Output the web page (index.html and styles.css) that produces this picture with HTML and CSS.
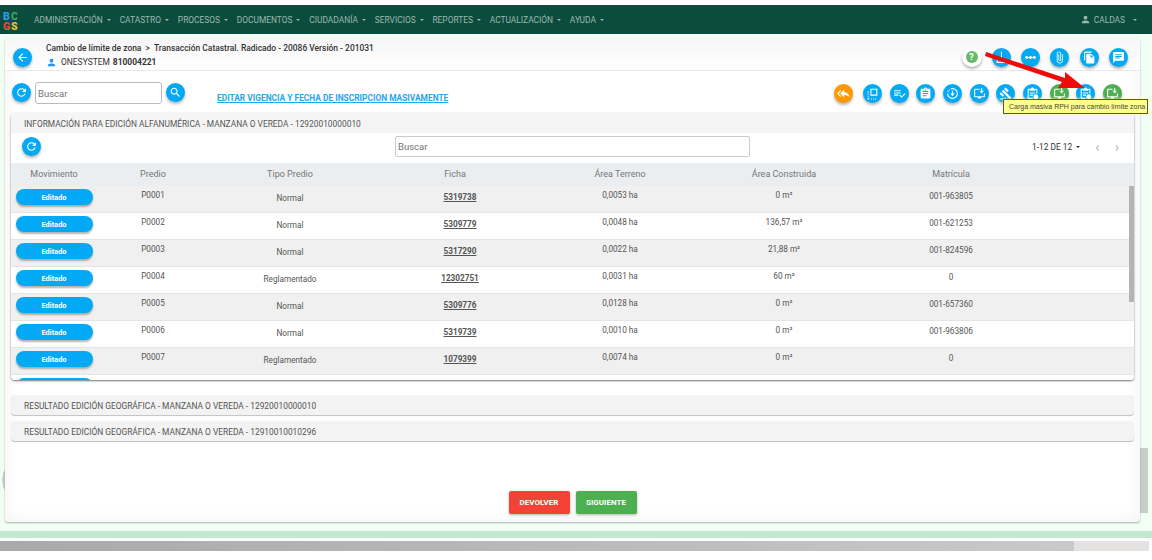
FILE: index.html
```html
<!DOCTYPE html>
<html lang="en">
<head>
    <meta charset="UTF-8">
    <meta name="viewport" content="width=device-width, initial-scale=1.0">
    <title>Cambio de límite de zona</title>
    <link rel="stylesheet" href="styles.css">
</head>
<body>
    <svg class="defs" width="0" height="0">
        <symbol id="i-back" viewBox="0 0 24 24"><path d="M20 11H7.83l5.59-5.59L12 4l-8 8 8 8 1.41-1.41L7.83 13H20v-2z"/></symbol>
        <symbol id="i-refresh" viewBox="0 0 24 24"><path d="M17.65 6.35C16.2 4.9 14.21 4 12 4c-4.42 0-7.99 3.58-7.99 8s3.57 8 7.99 8c3.73 0 6.84-2.55 7.73-6h-2.08c-.82 2.33-3.04 4-5.65 4-3.31 0-6-2.69-6-6s2.69-6 6-6c1.66 0 3.14.69 4.22 1.78L13 11h7V4l-2.35 2.35z"/></symbol>
        <symbol id="i-search" viewBox="0 0 24 24"><path d="M15.5 14h-.79l-.28-.27C15.41 12.59 16 11.11 16 9.5 16 5.91 13.09 3 9.5 3S3 5.91 3 9.5 5.91 16 9.5 16c1.61 0 3.09-.59 4.23-1.57l.27.28v.79l5 4.99L20.49 19l-4.99-5zm-6 0C7.01 14 5 11.99 5 9.5S7.01 5 9.5 5 14 7.01 14 9.5 11.99 14 9.5 14z"/></symbol>
        <symbol id="i-person" viewBox="0 0 24 24"><path d="M12 12c2.21 0 4-1.79 4-4s-1.79-4-4-4-4 1.79-4 4 1.79 4 4 4zm0 2c-2.67 0-8 1.34-8 4v2h16v-2c0-2.66-5.33-4-8-4z"/></symbol>
        <symbol id="i-clip" viewBox="0 0 24 24"><path d="M16.5 6v11.5c0 2.21-1.79 4-4 4s-4-1.79-4-4V5c0-1.38 1.12-2.5 2.5-2.5s2.5 1.12 2.5 2.5v10.5c0 .55-.45 1-1 1s-1-.45-1-1V6H10v9.5c0 1.38 1.12 2.5 2.5 2.5s2.5-1.12 2.5-2.5V5c0-2.21-1.79-4-4-4S7 2.79 7 5v12.5c0 3.04 2.46 5.5 5.5 5.5s5.5-2.46 5.5-5.5V6h-1.5z"/></symbol>
        <symbol id="i-copy" viewBox="0 0 24 24"><path d="M16 1H4c-1.1 0-2 .9-2 2v14h2V3h12V1zm-1 4l6 6v10c0 1.1-.9 2-2 2H7.99C6.89 23 6 22.1 6 21l.01-14c0-1.1.89-2 1.99-2h7zm-1 7h5.5L14 6.5V12z"/></symbol>
        <symbol id="i-chat" viewBox="0 0 24 24"><path d="M20 2H4c-1.1 0-1.99.9-1.99 2L2 22l4-4h14c1.1 0 2-.9 2-2V4c0-1.1-.9-2-2-2zM6 9h12v2H6V9zm8 5H6v-2h8v2zm4-6H6V6h12v2z"/></symbol>
        <symbol id="i-reply" viewBox="0 0 24 24"><path d="M7 8V5l-7 7 7 7v-3l-4-4 4-4zm6 1V5l-7 7 7 7v-4.1c5 0 8.5 1.6 11 5.1-1-5-4-10-11-11z"/></symbol>
        <symbol id="i-check" viewBox="0 0 24 24"><path d="M14 10H2v2h12v-2zm0-4H2v2h12V6zM2 16h8v-2H2v2zm19.5-4.5L23 13l-6.99 7-4.51-4.5L13 14l3.01 3 5.49-5.5z"/></symbol>
        <symbol id="i-note" viewBox="0 0 24 24"><path d="M19 3h-4.18C14.4 1.84 13.3 1 12 1c-1.3 0-2.4.84-2.82 2H5c-1.1 0-2 .9-2 2v14c0 1.1.9 2 2 2h14c1.1 0 2-.9 2-2V5c0-1.1-.9-2-2-2zm-7 0c.55 0 1 .45 1 1s-.45 1-1 1-1-.45-1-1 .45-1 1-1zm2 14H7v-2h7v2zm3-4H7v-2h10v2zm0-4H7V7h10v2z"/></symbol>
        <symbol id="i-gavel" viewBox="0 0 24 24"><path d="M1 21h12v2H1zM5.245 8.07l2.83-2.827 14.14 14.142-2.828 2.828zM12.317 1l5.657 5.656-2.83 2.83-5.654-5.66zM3.825 9.485l5.657 5.657-2.828 2.828-5.657-5.657z"/></symbol>
        <symbol id="i-dots" viewBox="0 0 24 24"><path d="M2 11h20v2H2z"/><circle cx="5" cy="12" r="2.6"/><circle cx="12" cy="12" r="2.6"/><circle cx="19" cy="12" r="2.6"/></symbol>
        <symbol id="i-upload" viewBox="0 0 24 24"><path d="M3 12h2v8h14v2H3zM11 2h2v12h5v2H6v-2h5z"/></symbol>
        <symbol id="i-front" viewBox="0 0 24 24"><path d="M8 3h13v13H8zm2 2v9h9V5zM3 8h2v2H3zm0 4h2v2H3zm0 4h2v2H3zm0 4h2v1h1v2H3zm6 1h2v2H9zm4 0h2v2h-2zm4 0h2v2h-2z"/></symbol>
        <symbol id="i-circle-down" viewBox="0 0 24 24"><path d="M12 2a10 10 0 0 0-3 .5l.6 1.900A8 8 0 1 1 4 12H2A10 10 0 1 0 12 2zM4.500 5.500l1.500 1.400 1.400-1.500-1.500-1.300zM2.500 9l1.900.6.600-1.900-1.900-.6z"/><path d="M11 7h2v5h3l-4 5-4-5h3z"/></symbol>
        <symbol id="i-screen" viewBox="0 0 24 24"><path d="M4 3h8v2H4v12h16v-5h2v5a2 2 0 0 1-2 2h-5v2H9v-2H4a2 2 0 0 1-2-2V5a2 2 0 0 1 2-2z"/><path d="M15 2h2v5h3l-4 5-4-5h3z"/></symbol>
        <symbol id="i-clipboard-plus" viewBox="0 0 24 24"><path d="M19 3h-4.180C14.400 1.840 13.300 1 12 1c-1.300 0-2.400.840-2.820 2H5a2 2 0 0 0-2 2v15a2 2 0 0 0 2 2h7v-2H5V5h2v2h10V5h2v7h2V5a2 2 0 0 0-2-2zM7 10h10v2H7zm0 4h6v2H7z"/><circle cx="18" cy="18" r="4.500"/></symbol>
    </svg>

    <nav class="navbar">
        <div class="logo">
            <span class="logo-b">B</span><span class="logo-c">C</span>
            <span class="logo-g">G</span><span class="logo-s">S</span>
        </div>
        <ul class="nav-menu">
            <li class="nav-item caret">ADMINISTRACIÓN</li>
            <li class="nav-item caret">CATASTRO</li>
            <li class="nav-item caret">PROCESOS</li>
            <li class="nav-item caret">DOCUMENTOS</li>
            <li class="nav-item caret">CIUDADANÍA</li>
            <li class="nav-item caret">SERVICIOS</li>
            <li class="nav-item caret">REPORTES</li>
            <li class="nav-item caret">ACTUALIZACIÓN</li>
            <li class="nav-item caret">AYUDA</li>
        </ul>
        <div class="nav-user caret">
            <svg class="nav-user-icon"><use href="#i-person"/></svg>
            CALDAS
        </div>
    </nav>

    <main class="page">
        <span class="deco-circle"></span>
        <span class="deco-strip"></span>

        <section class="card">
            <header class="card-header">
                <button class="round blue back-btn"><svg><use href="#i-back"/></svg></button>
                <div class="heading">
                    <p class="heading-title">Cambio de límite de zona &nbsp;&gt;&nbsp; Transacción Catastral. Radicado - 20086 Versión - 201031</p>
                    <p class="heading-owner">
                        <svg class="owner-icon"><use href="#i-person"/></svg>
                        ONESYSTEM <b>810004221</b>
                    </p>
                </div>
                <div class="header-actions">
                    <button class="round help-btn"><span>?</span></button>
                    <button class="round blue"><svg><use href="#i-upload"/></svg></button>
                    <button class="round blue"><svg><use href="#i-dots"/></svg></button>
                    <button class="round blue"><svg><use href="#i-clip"/></svg></button>
                    <button class="round blue"><svg><use href="#i-copy"/></svg></button>
                    <button class="round blue"><svg><use href="#i-chat"/></svg></button>
                </div>
            </header>

            <div class="toolbar">
                <button class="round blue"><svg><use href="#i-refresh"/></svg></button>
                <input class="search-input" placeholder="Buscar">
                <button class="round blue search-btn"><svg><use href="#i-search"/></svg></button>
                <a class="mass-link">EDITAR VIGENCIA Y FECHA DE INSCRIPCION MASIVAMENTE</a>
                <div class="toolbar-actions">
                    <button class="round orange"><svg><use href="#i-reply"/></svg></button>
                    <button class="round blue"><svg><use href="#i-front"/></svg></button>
                    <button class="round blue"><svg><use href="#i-check"/></svg></button>
                    <button class="round blue"><svg><use href="#i-note"/></svg></button>
                    <button class="round blue"><svg><use href="#i-circle-down"/></svg></button>
                    <button class="round blue"><svg><use href="#i-screen"/></svg></button>
                    <button class="round blue"><svg><use href="#i-gavel"/></svg></button>
                    <button class="round blue"><svg><use href="#i-clipboard-plus"/></svg></button>
                    <button class="round green"><svg><use href="#i-screen"/></svg></button>
                    <button class="round blue"><svg><use href="#i-clipboard-plus"/></svg></button>
                    <button class="round green"><svg><use href="#i-screen"/></svg></button>
                </div>
            </div>

            <section class="panel">
                <h2 class="panel-title">INFORMACIÓN PARA EDICIÓN ALFANUMÉRICA - MANZANA O VEREDA - 12920010000010</h2>
                <div class="table-tools">
                    <button class="round blue"><svg><use href="#i-refresh"/></svg></button>
                    <input class="table-search" placeholder="Buscar">
                    <span class="pager caret">1-12 DE 12</span>
                    <span class="pager-arrows"><i>&lsaquo;</i><i>&rsaquo;</i></span>
                </div>
                <div class="table-head grid-row">
                    <span>Movimiento</span><span>Predio</span><span>Tipo Predio</span><span>Ficha</span>
                    <span>Área Terreno</span><span>Área Construida</span><span>Matrícula</span>
                </div>
                <div class="table-body">
                    <div class="grid-row data-row">
                        <span><button class="state-btn">Editado</button></span><span class="up">P0001</span><span class="down">Normal</span><b class="ficha">5319738</b>
                        <span class="up">0,0053 ha</span><span class="up">0 m²</span><span class="mid">001-963805</span>
                    </div>
                    <div class="grid-row data-row">
                        <span><button class="state-btn">Editado</button></span><span class="up">P0002</span><span class="down">Normal</span><b class="ficha">5309779</b>
                        <span class="up">0,0048 ha</span><span class="up">136,57 m²</span><span class="mid">001-621253</span>
                    </div>
                    <div class="grid-row data-row">
                        <span><button class="state-btn">Editado</button></span><span class="up">P0003</span><span class="down">Normal</span><b class="ficha">5317290</b>
                        <span class="up">0,0022 ha</span><span class="up">21,88 m²</span><span class="mid">001-824596</span>
                    </div>
                    <div class="grid-row data-row">
                        <span><button class="state-btn">Editado</button></span><span class="up">P0004</span><span class="down">Reglamentado</span><b class="ficha">12302751</b>
                        <span class="up">0,0031 ha</span><span class="up">60 m²</span><span class="mid">0</span>
                    </div>
                    <div class="grid-row data-row">
                        <span><button class="state-btn">Editado</button></span><span class="up">P0005</span><span class="down">Normal</span><b class="ficha">5309776</b>
                        <span class="up">0,0128 ha</span><span class="up">0 m²</span><span class="mid">001-657360</span>
                    </div>
                    <div class="grid-row data-row">
                        <span><button class="state-btn">Editado</button></span><span class="up">P0006</span><span class="down">Normal</span><b class="ficha">5319739</b>
                        <span class="up">0,0010 ha</span><span class="up">0 m²</span><span class="mid">001-963806</span>
                    </div>
                    <div class="grid-row data-row">
                        <span><button class="state-btn">Editado</button></span><span class="up">P0007</span><span class="down">Reglamentado</span><b class="ficha">1079399</b>
                        <span class="up">0,0074 ha</span><span class="up">0 m²</span><span class="mid">0</span>
                    </div>
                    <div class="grid-row data-row">
                        <span><button class="state-btn"></button></span>
                    </div>
                    <span class="table-thumb"></span>
                </div>
            </section>

            <div class="accordion">RESULTADO EDICIÓN GEOGRÁFICA - MANZANA O VEREDA - 12920010000010</div>
            <div class="accordion">RESULTADO EDICIÓN GEOGRÁFICA - MANZANA O VEREDA - 12910010010296</div>

            <footer class="card-footer">
                <button class="action-btn red">DEVOLVER</button>
                <button class="action-btn lime">SIGUIENTE</button>
            </footer>
        </section>

        <!-- callout drawn on top of the capture -->
        <svg class="callout-arrow" width="120" height="60" viewBox="0 0 120 60">
            <path d="M2 3 L81 29 L81 23 L101 39 L74 39 L78 33 L1 7 Z" fill="#f00b0b"/>
        </svg>
        <div class="tooltip">Carga masiva RPH para cambio límite zona</div>
    </main>

    <div class="stripe"></div>
    <div class="page-scroll"><span class="page-scroll-thumb"></span></div>
</body>
</html>
```

FILE: styles.css
```css
*{
    box-sizing: border-box;
    margin: 0;
    padding: 0;
    font-family: Roboto, "Liberation Sans", sans-serif;
}
body{
    width: 1152px;
    height: 560px;
    overflow: hidden;
    background-color: white;
    padding-top: 5px;
}
button{
    border: none;
    cursor: pointer;
}
.defs{
    position: absolute;
}

/* navbar */
.navbar{
    display: flex;
    align-items: center;
    height: 29px;
    background-color: #0b4c3f;
    color: #9db8ad;
    font-size: 8.4px;
    box-shadow: 0 1px 1px #a9c9b7;
}
.logo{
    position: relative;
    display: grid;
    grid-template-columns: 8px 8px;
    width: 34px;
    margin-top: 4px;
    padding-left: 3px;
    font-size: 10.5px;
    font-weight: 900;
    line-height: 10px;
}
.logo::after{
    content: "";
    position: absolute;
    left: 9px;
    top: 7px;
    width: 4px;
    height: 4px;
    border-radius: 50%;
    background-color: #1c3f8f;
}
.logo-b{ color: #2f9be0; }
.logo-c{ color: #34a853; }
.logo-g{ color: #e0523f; }
.logo-s{ color: #e6c233; }
.nav-menu{
    display: flex;
    gap: 8.8px;
    list-style: none;
    flex: 1;
}
.caret::after{
    content: "";
    display: inline-block;
    margin-left: 4px;
    vertical-align: 2px;
    border-top: 2px solid currentColor;
    border-left: 2px solid transparent;
    border-right: 2px solid transparent;
}
.nav-user{
    display: flex;
    align-items: center;
    gap: 3px;
    padding-right: 15px;
}
.nav-user::after{
    margin-left: 5px;
}
.nav-user-icon{
    width: 11px;
    height: 11px;
    fill: #9db8ad;
}

/* page */
.page{
    position: relative;
    height: 497px;
    padding: 4px 12px 9px 5px;
    background-color: #f2fff5;
}
.deco-circle{
    position: absolute;
    left: 2px;
    top: 426px;
    width: 40px;
    height: 40px;
    border-radius: 50%;
    background-color: #c9d2ca;
}
.deco-strip{
    position: absolute;
    left: 1140px;
    top: 414px;
    width: 8px;
    height: 65px;
    background-color: #c5d1c6;
}
.card{
    position: relative;
    display: flex;
    flex-direction: column;
    height: 484px;
    background-color: white;
    border-radius: 3px;
    box-shadow: 0 1px 2px rgba(0,0,0,.3), inset 0 0 16px rgba(0,0,0,.06);
}

.round{
    display: flex;
    flex: none;
    align-items: center;
    justify-content: center;
    width: 19px;
    height: 19px;
    border-radius: 50%;
    box-shadow: 0 2px 3px rgba(0,0,0,.3);
}
.round svg{
    width: 13px;
    height: 13px;
    fill: white;
}
.blue{ background-color: #03a9f4; }
.orange{ background-color: #ff9800; }
.green{ background-color: #4caf50; }

.card-header{
    display: flex;
    align-items: center;
    height: 33px;
    padding: 0 12px 0 8px;
    border-bottom: 1px solid #e9e9e9;
    background: linear-gradient(#f6f6f6, white);
}
.back-btn{
    margin-top: 7px;
}
.heading{
    flex: 1;
    padding: 2px 0 0 14px;
    color: #333;
    font-size: 8.45px;
}
.heading-title{
    font-weight: 500;
    line-height: 13px;
    margin-bottom: 1px;
}
.heading-owner{
    display: flex;
    align-items: center;
    gap: 3px;
    line-height: 13px;
}
.heading-owner b{
    font-weight: 700;
}
.owner-icon{
    width: 11px;
    height: 11px;
    fill: #2196f3;
    margin-right: 1px;
}
.header-actions{
    display: flex;
    gap: 10.3px;
    align-items: center;
    margin-top: 6px;
}
.help-btn{
    width: 20px;
    height: 20px;
    background-color: white;
}
.help-btn span{
    width: 12px;
    height: 12px;
    border-radius: 50%;
    background-color: #66bb6a;
    color: white;
    font-size: 9px;
    font-weight: 700;
    line-height: 12px;
}

.toolbar{
    display: flex;
    align-items: center;
    height: 42px;
    padding-left: 7px;
}
.search-input{
    width: 127px;
    height: 22px;
    margin: 2px 4px 0 4px;
    padding-left: 2px;
    border: 1px solid #bbb;
    border-radius: 3px;
    font-size: 9.5px;
}
.search-btn{
    margin-right: 32px;
}
.mass-link{
    flex: 1;
    margin-top: 11px;
    color: #1ea7ea;
    font-size: 8.4px;
    font-weight: 700;
    text-decoration: underline;
}
.toolbar-actions{
    display: flex;
    gap: 7.7px;
    margin-top: 3px;
    padding-right: 18px;
}
.toolbar-actions .orange{
    margin-right: 2px;
}

/* panel with table */
.panel{
    height: 267px;
    margin: 0 6px;
    overflow: hidden;
    border-radius: 4px;
    box-shadow: 0 1px 2px rgba(0,0,0,.55);
}
.panel-title{
    height: 20px;
    padding-left: 13px;
    background-color: #f5f5f5;
    color: #555;
    font-size: 8.4px;
    font-weight: 400;
    line-height: 22px;
}
.table-tools{
    display: flex;
    align-items: center;
    height: 30px;
    padding: 0 0 3px 11px;
    background-color: white;
    color: #333;
    font-size: 8.4px;
}
.table-search{
    width: 355px;
    height: 21px;
    margin: 0 282px 0 354px;
    padding-left: 2px;
    border: 1px solid #ccc;
    border-radius: 2px;
    font-size: 9.5px;
}
.pager-arrows{
    display: flex;
    gap: 15px;
    margin-left: 15px;
    color: #bbb;
    font-size: 15px;
}
.pager-arrows i{
    font-style: normal;
}
.grid-row{
    display: grid;
    grid-template-columns: 86px 112px 162px 168px 162px 166px 168px;
    justify-items: center;
    align-items: center;
}
.table-head{
    height: 23px;
    padding-bottom: 2px;
    background-color: #ebeef0;
    color: #777;
    font-size: 9px;
}
.table-body{
    position: relative;
}
.data-row{
    height: 27px;
    padding-bottom: 2px;
    border-bottom: 1px solid #e4e4e4;
    color: #555;
    font-size: 8.2px;
}
.data-row:nth-child(odd){
    background-color: #f0f0f0;
}
.data-row:nth-child(even){
    background-color: white;
}
.up{
    margin-bottom: 7px;
}
.mid{
    margin-bottom: 4px;
}
.down{
    margin-bottom: 0;
}
.ficha{
    margin: 0 0 2px 10px;
    color: #555;
    font-weight: 700;
    text-decoration: underline;
}
.state-btn{
    display: block;
    width: 77px;
    height: 16px;
    margin-bottom: 2px;
    border-radius: 8px;
    background-color: #03a9f4;
    box-shadow: 0 2px 2px rgba(0,0,0,.3);
    color: white;
    font-size: 7.4px;
    font-weight: 700;
}
.table-thumb{
    position: absolute;
    top: 0;
    right: 0;
    width: 5px;
    height: 116px;
    background-color: #b4b4b4;
}

.accordion{
    height: 20px;
    margin: 0 6px;
    padding-left: 13px;
    border-radius: 4px;
    background-color: #f3f3f3;
    box-shadow: 0 1px 1px rgba(0,0,0,.25);
    color: #555;
    font-size: 8.4px;
    line-height: 22px;
}
.panel + .accordion{
    margin-top: 15px;
}
.accordion + .accordion{
    margin-top: 6px;
}
.card-footer{
    display: flex;
    justify-content: center;
    gap: 6px;
    margin-top: auto;
    padding-bottom: 8px;
}
.action-btn{
    width: 61px;
    height: 23px;
    border-radius: 2px;
    box-shadow: 0 1px 3px rgba(0,0,0,.3);
    color: white;
    font-size: 8px;
    font-weight: 700;
}
.red{ background-color: #f44336; }
.lime{ background-color: #4caf50; }

/* overlay */
.callout-arrow{
    position: absolute;
    left: 984px;
    top: 15px;
}
.tooltip{
    position: absolute;
    left: 1003px;
    top: 65px;
    width: 145px;
    height: 15px;
    padding-left: 5px;
    background-color: #ffff8c;
    border: 1px solid #555;
    box-shadow: 0 0 3px #ffff8c;
    color: #444;
    font-family: "Liberation Sans", sans-serif;
    font-size: 7px;
    line-height: 14px;
    white-space: nowrap;
}

.stripe{
    height: 7px;
    background-color: #c3ead0;
}
.page-scroll{
    height: 10px;
    margin: 3px 3px 0 0;
    background-color: #e5e2e2;
    border-radius: 1px;
}
.page-scroll-thumb{
    display: block;
    width: 1074px;
    height: 10px;
    background: linear-gradient(90deg, #a9a9a9, #c9c9c9);
}
```
